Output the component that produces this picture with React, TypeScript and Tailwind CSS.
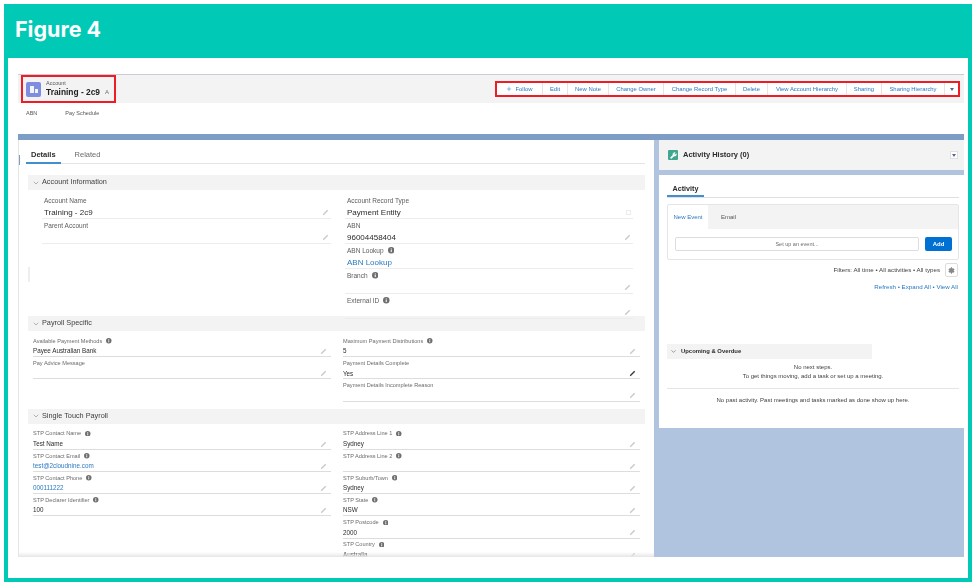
import { ChevronDown, Plus, Settings, Wrench } from 'lucide-react';

const actions = [
    { label: 'Follow', width: 'w-[46px]', plus: true },
    { label: 'Edit', width: 'w-[25px]' },
    { label: 'New Note', width: 'w-[41px]' },
    { label: 'Change Owner', width: 'w-[55px]' },
    { label: 'Change Record Type', width: 'w-[72px]' },
    { label: 'Delete', width: 'w-[32px]' },
    { label: 'View Account Hierarchy', width: 'w-[79px]' },
    { label: 'Sharing', width: 'w-[35px]' },
    { label: 'Sharing Hierarchy', width: 'w-[63px]' },
];

interface FieldData {
    label: string;
    value?: string;
    info?: boolean;
    link?: boolean;
    pen?: 'none' | 'dark' | 'box';
}

const accountLeft: FieldData[] = [
    { label: 'Account Name', value: 'Training - 2c9' },
    { label: 'Parent Account' },
];

const accountRight: FieldData[] = [
    { label: 'Account Record Type', value: 'Payment Entity', pen: 'box' },
    { label: 'ABN', value: '96004458404' },
    { label: 'ABN Lookup', value: 'ABN Lookup', info: true, link: true, pen: 'none' },
    { label: 'Branch', info: true },
    { label: 'External ID', info: true },
];

const payrollLeft: FieldData[] = [
    { label: 'Available Payment Methods', value: 'Payee Australian Bank', info: true },
    { label: 'Pay Advice Message' },
];

const payrollRight: FieldData[] = [
    { label: 'Maximum Payment Distributions', value: '5', info: true },
    { label: 'Payment Details Complete', value: 'Yes', pen: 'dark' },
    { label: 'Payment Details Incomplete Reason' },
];

const stpLeft: FieldData[] = [
    { label: 'STP Contact Name', value: 'Test Name', info: true },
    { label: 'STP Contact Email', value: 'test@2cloudnine.com', info: true, link: true },
    { label: 'STP Contact Phone', value: '000111222', info: true, link: true },
    { label: 'STP Declarer Identifier', value: '100', info: true },
];

const stpRight: FieldData[] = [
    { label: 'STP Address Line 1', value: 'Sydney', info: true },
    { label: 'STP Address Line 2', info: true },
    { label: 'STP Suburb/Town', value: 'Sydney', info: true },
    { label: 'STP State', value: 'NSW', info: true },
    { label: 'STP Postcode', value: '2000', info: true },
    { label: 'STP Country', value: 'Australia', info: true },
];

function Pencil({ dark }: { dark?: boolean }) {
    return (
        <svg width="7" height="7" viewBox="0 0 7 7" className="shrink-0">
            <path d="M0.8 6.2 L1.2 4.8 L5.2 0.8 L6.2 1.8 L2.2 5.8 Z" fill={dark ? '#3a3a3a' : '#c9c9c9'} />
        </svg>
    );
}

function Info({ size = 6 }: { size?: number }) {
    return (
        <svg width={size} height={size} viewBox="0 0 10 10" className="shrink-0">
            <circle cx="5" cy="5" r="5" fill="#706e6b" />
            <rect x="4.2" y="4.2" width="1.6" height="3.6" fill="#fff" />
            <rect x="4.2" y="2.2" width="1.6" height="1.4" fill="#fff" />
        </svg>
    );
}

function Field({ field, large }: { field: FieldData; large?: boolean }) {
    const pen = field.pen ?? 'light';
    return (
        <div className={large ? 'h-[25px] border-b border-[#ececec] pl-[2px] pt-[1px]' : 'h-[22.2px] border-b border-[#dddddd]'}>
            <div className={large ? 'flex h-[11px] items-center gap-[4px] text-[6.5px] text-[#5c5c5c]' : 'flex h-[12px] items-center gap-[4px] text-[5.6px] text-[#6b6b6b]'}>
                {field.label}
                {field.info && <Info size={large ? 6.5 : 5.5} />}
            </div>
            <div className={large ? 'flex h-[13px] items-center justify-between pr-[2px] text-[8px] leading-none text-[#2b2b2b]' : 'flex h-[9px] items-center justify-between pr-[4px] text-[6.3px] leading-none text-[#2b2b2b]'}>
                <span className={field.link ? 'text-[#2a79c2]' : ''}>{field.value ?? '\u00a0'}</span>
                {pen === 'light' && <Pencil />}
                {pen === 'dark' && <Pencil dark />}
                {pen === 'box' && <span className="h-[5px] w-[5px] border border-[#ececec]" />}
            </div>
        </div>
    );
}

function Section({ title, className }: { title: string; className?: string }) {
    return (
        <div className={`flex h-[15px] items-center gap-[2px] bg-[#f3f3f3] pl-[4px] text-[7.3px] text-[#3e3e3c] ${className ?? ''}`}>
            <ChevronDown size={8} strokeWidth={1.5} className="text-[#706e6b]" />
            {title}
        </div>
    );
}

function Caret() {
    return <span className="h-0 w-0 border-x-[2.5px] border-t-[3px] border-x-transparent border-t-[#54698d]" />;
}

export default function App() {
    return (
        <div className="h-[586px] w-[976px] overflow-hidden bg-white p-[4px] font-['Liberation_Sans',sans-serif]">
            <div className="flex h-[578px] w-[968px] flex-col bg-[#00c9b5] px-[4px] pb-[4px]">
                <div className="flex h-[54px] items-center pl-[7px] pb-[3px] font-['Inter',sans-serif] text-[21.5px] font-bold text-white">
                    Figure 4
                </div>
                <div className="flex-1 bg-white pl-[10px] pr-[4px] pt-[16px] blur-[0.3px]">
                    {/* page header */}
                    <div className="flex h-[29px] items-center justify-between border-t border-[#c9ced6] bg-[#f3f3f3] pl-[3px] pr-[4px]">
                        <div className="flex h-[28px] w-[95px] items-center border-2 border-[#ee1c25] pl-[3px]">
                            <span className="mr-[5px] flex h-[15px] w-[15px] items-center justify-center rounded-[2px] bg-[#7f8de1]">
                                <span className="flex items-end gap-[1px]">
                                    <span className="h-[7px] w-[4px] bg-white/90" />
                                    <span className="h-[4px] w-[3px] bg-white/90" />
                                </span>
                            </span>
                            <div className="flex flex-col">
                                <span className="text-[5.5px] leading-[7px] text-[#555555]">Account</span>
                                <span className="flex items-center gap-[5px] text-[8.4px] font-bold leading-[11px] text-[#222222]">
                                    Training - 2c9
                                    <span className="text-[6px] font-normal text-[#706e6b]">A</span>
                                </span>
                            </div>
                        </div>
                        <div className="flex h-[16px] items-center border-2 border-[#ee1c25]">
                            {actions.map((a) => (
                                <div key={a.label} className={`flex h-full items-center justify-center gap-[3px] border-r border-[#e4e4e4] bg-white text-[5.9px] text-[#2a79c2] ${a.width}`}>
                                    {a.plus && <Plus size={6} strokeWidth={2} />}
                                    {a.label}
                                </div>
                            ))}
                            <div className="flex h-full w-[13px] items-center justify-center bg-white">
                                <Caret />
                            </div>
                        </div>
                    </div>

                    <div className="flex h-[31px] items-center gap-[28px] pb-[10px] pl-[8px] text-[5.5px] text-[#555555]">
                        <span>ABN</span>
                        <span>Pay Schedule</span>
                    </div>
                    <div className="h-[6px] bg-[#7d9dc7]" />

                    <div className="flex h-[417px]">
                        {/* details */}
                        <div className="relative w-[636px] overflow-hidden border-l border-[#e5e5e5] pl-[9px] pr-[9px]">
                            <span className="absolute left-0 top-[15px] h-[10px] w-[1px] bg-[#7d9dc7]" />
                            <span className="absolute left-[9px] top-[127px] h-[15px] w-[2px] bg-[#eeeeee]" />
                            <div className="ml-[-1px] flex h-[24px] items-end gap-[16px] border-b border-[#e5e5e5] pb-[3px] pl-[4px] text-[7.5px]">
                                <span className="relative flex items-center font-bold text-[#2b2b2b]">
                                    Details
                                    <span className="absolute bottom-[-4px] left-[-5px] right-[-5px] h-[2px] bg-[#3f8fd1]" />
                                </span>
                                <span className="ml-[3px] text-[#6b6b6b]">Related</span>
                            </div>
                            <Section title="Account Information" className="mt-[11px]" />
                            <div className="mt-[4px] flex gap-[14px] pl-[14px]">
                                <div className="w-[289px]">
                                    {accountLeft.map((f) => <Field key={f.label} field={f} large />)}
                                </div>
                                <div className="w-[288px]">
                                    {accountRight.map((f) => <Field key={f.label} field={f} large />)}
                                </div>
                            </div>
                            <Section title="Payroll Specific" className="-mt-[3px]" />
                            <div className="mt-[4px] flex gap-[12px] pl-[5px]">
                                <div className="w-[298px]">
                                    {payrollLeft.map((f) => <Field key={f.label} field={f} />)}
                                </div>
                                <div className="w-[297px]">
                                    {payrollRight.map((f) => <Field key={f.label} field={f} />)}
                                </div>
                            </div>
                            <Section title="Single Touch Payroll" className="mt-[7px]" />
                            <div className="mt-[4px] flex gap-[12px] pl-[5px]">
                                <div className="w-[298px]">
                                    {stpLeft.map((f) => <Field key={f.label} field={f} />)}
                                </div>
                                <div className="w-[297px]">
                                    {stpRight.map((f) => <Field key={f.label} field={f} />)}
                                </div>
                            </div>
                            <div className="absolute inset-x-0 bottom-0 h-[5px] bg-gradient-to-b from-white/0 to-[#e6e6e6]" />
                        </div>

                        {/* activity */}
                        <div className="flex flex-1 flex-col bg-[#b0c4df] pl-[5px]">
                            <div className="flex h-[30px] items-center justify-between bg-[#f3f3f3] pl-[9px] pr-[6px]">
                                <div className="flex items-center gap-[5px] text-[7.5px] font-bold text-[#2b2b2b]">
                                    <span className="flex h-[10px] w-[10px] items-center justify-center rounded-[1px] bg-[#3fa68f]">
                                        <Wrench size={7} color="#fff" fill="#fff" />
                                    </span>
                                    Activity History (0)
                                </div>
                                <span className="flex h-[8px] w-[8px] items-center justify-center border border-[#e0e0e0] bg-white">
                                    <Caret />
                                </span>
                            </div>
                            <div className="mt-[5px] h-[253px] bg-white px-[8px] pr-[5px]">
                                <div className="flex h-[23px] items-end border-b border-[#e0e0e0]">
                                    <span className="flex h-[12px] w-[37px] items-start justify-center border-b-2 border-[#3f8fd1] text-[7.2px] font-bold leading-[8px] text-[#2b2b2b]">
                                        Activity
                                    </span>
                                </div>
                                <div className="mt-[6px] h-[56px] rounded-[2px] border border-[#e5e5e5]">
                                    <div className="flex h-[24px]">
                                        <span className="flex w-[40px] items-center justify-center text-[6px] text-[#2a79c2]">New Event</span>
                                        <span className="flex flex-1 items-center bg-[#f3f3f3] pl-[13px] text-[6px] text-[#555555]">Email</span>
                                    </div>
                                    <div className="mt-[8px] flex h-[14px] gap-[6px] pl-[7px]">
                                        <div className="flex w-[244px] items-center justify-center rounded-[2px] border border-[#dddddd] text-[5.5px] text-[#6b6b6b]">
                                            Set up an event...
                                        </div>
                                        <div className="flex w-[27px] items-center justify-center rounded-[2px] bg-[#0070d2] text-[6px] font-bold text-white">
                                            Add
                                        </div>
                                    </div>
                                </div>
                                <div className="mt-[3px] flex h-[14px] items-center justify-end gap-[5px] text-[6.2px] text-[#3e3e3c]">
                                    Filters: All time • All activities • All types
                                    <span className="mr-[1px] flex h-[14px] w-[13px] items-center justify-center rounded-[2px] border border-[#dddddd]">
                                        <Settings size={7} color="#888888" fill="#888888" />
                                    </span>
                                </div>
                                <div className="mt-[5px] pr-[1px] text-right text-[6.2px] text-[#2a79c2]">
                                    Refresh • Expand All • View All
                                </div>
                                <div className="mt-[53px] flex h-[15px] w-[205px] items-center gap-[4px] bg-[#f3f3f3] pl-[3px] text-[5.9px] font-bold text-[#2b2b2b]">
                                    <ChevronDown size={7} strokeWidth={1.5} />
                                    Upcoming &amp; Overdue
                                </div>
                                <div className="mt-[4px] text-center text-[6px] leading-[9px] text-[#3e3e3c]">
                                    <div>No next steps.</div>
                                    <div>To get things moving, add a task or set up a meeting.</div>
                                </div>
                                <div className="mt-[7px] border-t border-[#e5e5e5] pt-[7px] text-center text-[6px] text-[#3e3e3c]">
                                    No past activity. Past meetings and tasks marked as done show up here.
                                </div>
                            </div>
                        </div>
                    </div>
                </div>
            </div>
        </div>
    );
}
